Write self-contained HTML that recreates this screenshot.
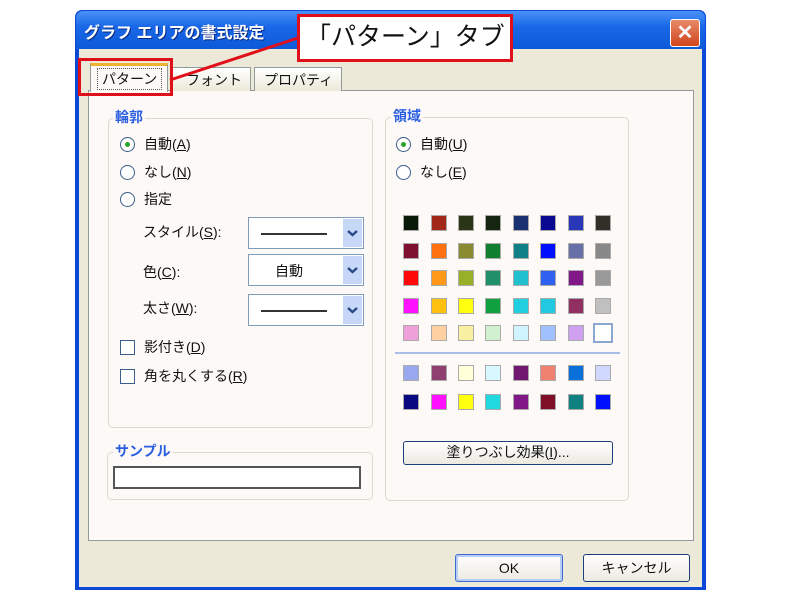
<!DOCTYPE html>
<html><head><meta charset="utf-8"><style>
*{box-sizing:border-box;margin:0;padding:0}
body{width:800px;height:600px;background:#fff;position:relative;overflow:hidden;font-family:"Liberation Sans","Noto Sans CJK JP",sans-serif;font-size:14px;color:#111}
.a{position:absolute}
.grp{position:absolute;border:1px solid #ddd8cc;border-radius:5px}
.lg{position:absolute;color:#2a5ee0;font-size:14px;background:#fdf9f8;padding:0 2px;font-weight:bold}
.rad{position:absolute;width:15px;height:15px;border:1px solid #3a5d8c;border-radius:50%;background:#fff}
.rad.on::after{content:"";position:absolute;left:4px;top:4px;width:5px;height:5px;border-radius:50%;background:#2aa32a}
.chk{position:absolute;width:15px;height:15px;border:1px solid #3a5d8c;background:#fff}
.t{position:absolute;font-size:14px;white-space:nowrap}
.cb{position:absolute;width:116px;height:32px;border:1px solid #7f9db9;background:#fff}
.cb .dd{position:absolute;right:1px;top:1px;width:19px;height:28px;background:#c7d7f7}
.cb .ln{position:absolute;left:12px;top:15px;width:66px;height:2px;background:#333}
.sw{position:absolute;width:16px;height:16px;border:1px solid #aaa}
.btn{position:absolute;border:1px solid #1c3f7a;border-radius:3px;background:linear-gradient(#fff,#ece9e0);text-align:center;font-size:14px}
</style></head><body>
<div class="a" style="left:75px;top:10px;width:631px;height:580px;background:#0a49d8;border-radius:7px 7px 0 0"></div>
<div class="a" style="left:76px;top:11px;width:629px;height:38px;background:linear-gradient(#4a92f7,#1a68e8 40%,#0c5ad8);border-radius:7px 7px 0 0"></div>
<div class="a" style="left:84px;top:19px;color:#fff;font-weight:bold;font-size:16px;text-shadow:1px 1px #0a2a80">グラフ エリアの書式設定</div>
<div class="a" style="left:670px;top:19px;width:30px;height:28px;background:linear-gradient(#e88a6a,#d0451c);border:1px solid #fff;border-radius:3px;color:#fff;font-size:20px;font-weight:bold;text-align:center;line-height:26px">✕</div>
<div class="a" style="left:79px;top:49px;width:623px;height:538px;background:#ece9d8"></div>
<div class="a" style="left:88px;top:90px;width:606px;height:451px;background:#fcf9f7;border:1px solid #919b9c"></div>
<div class="a" style="left:90px;top:63px;width:78px;height:29px;background:#fcf9f7;border:1px solid #919b9c;border-bottom:none;border-top:3px solid #f0b030"></div>
<div class="t" style="left:97px;top:68px;border:1px dotted #555;padding:0 4px">パターン</div>
<div class="a" style="left:171px;top:67px;width:80px;height:24px;background:linear-gradient(#fff,#ece9d8);border:1px solid #919b9c;border-bottom:none"></div>
<div class="t" style="left:186px;top:70px">フォント</div>
<div class="a" style="left:254px;top:67px;width:88px;height:24px;background:linear-gradient(#fff,#ece9d8);border:1px solid #919b9c;border-bottom:none"></div>
<div class="t" style="left:264px;top:70px">プロパティ</div>
<div class="grp" style="left:108px;top:118px;width:265px;height:310px"></div>
<div class="lg" style="left:113px;top:107px">輪郭</div>
<div class="rad on" style="left:120px;top:137px"></div><div class="t" style="left:144px;top:134px">自動(<u>A</u>)</div>
<div class="rad" style="left:120px;top:165px"></div><div class="t" style="left:144px;top:162px">なし(<u>N</u>)</div>
<div class="rad" style="left:120px;top:192px"></div><div class="t" style="left:144px;top:189px">指定</div>
<div class="t" style="left:143px;top:222px">スタイル(<u>S</u>):</div>
<div class="cb" style="left:248px;top:217px"><div class="ln"></div><div class="dd"><svg width="19" height="28"><path d="M5 12l4.5 4 4.5-4" fill="none" stroke="#2a4a8a" stroke-width="2.5"/></svg></div></div>
<div class="t" style="left:143px;top:262px">色(<u>C</u>):</div>
<div class="cb" style="left:248px;top:254px"><div class="t" style="left:26px;top:6px">自動</div><div class="dd"><svg width="19" height="28"><path d="M5 12l4.5 4 4.5-4" fill="none" stroke="#2a4a8a" stroke-width="2.5"/></svg></div></div>
<div class="t" style="left:143px;top:298px">太さ(<u>W</u>):</div>
<div class="cb" style="left:248px;top:294px"><div class="ln"></div><div class="dd"><svg width="19" height="28"><path d="M5 12l4.5 4 4.5-4" fill="none" stroke="#2a4a8a" stroke-width="2.5"/></svg></div></div>
<div class="chk" style="left:120px;top:340px"></div><div class="t" style="left:144px;top:337px">影付き(<u>D</u>)</div>
<div class="chk" style="left:120px;top:369px"></div><div class="t" style="left:144px;top:366px">角を丸くする(<u>R</u>)</div>
<div class="grp" style="left:107px;top:452px;width:266px;height:48px"></div>
<div class="lg" style="left:113px;top:441px">サンプル</div>
<div class="a" style="left:113px;top:466px;width:248px;height:23px;border:2px solid #555;background:#fff"></div>
<div class="grp" style="left:385px;top:117px;width:244px;height:384px"></div>
<div class="lg" style="left:391px;top:106px">領域</div>
<div class="rad on" style="left:396px;top:137px"></div><div class="t" style="left:420px;top:134px">自動(<u>U</u>)</div>
<div class="rad" style="left:396px;top:165px"></div><div class="t" style="left:420px;top:162px">なし(<u>E</u>)</div>
<div class="a" style="left:395px;top:352px;width:225px;height:2px;background:#a8bde8"></div>
<div id="pal"></div>
<div class="btn" style="left:403px;top:441px;width:210px;height:24px;line-height:21px">塗りつぶし効果(<u>I</u>)...</div>
<div class="btn" style="left:455px;top:554px;width:108px;height:28px;line-height:26px;border-color:#3c6ad0;box-shadow:inset 0 0 0 2px #b8cdf5">OK</div>
<div class="btn" style="left:583px;top:554px;width:107px;height:28px;line-height:26px">キャンセル</div>
<div class="a" style="left:78px;top:58px;width:95px;height:38px;border:3px solid #e0101a"></div>
<svg class="a" style="left:0;top:0" width="800" height="600"><line x1="170" y1="80" x2="298" y2="38" stroke="#e0101a" stroke-width="3"/></svg>
<div class="a" style="left:297px;top:14px;width:216px;height:48px;border:3px solid #e0101a;background:#fff;font-size:25px;line-height:40px;padding-left:6px;white-space:nowrap">「パターン」タブ</div>
<script>
var xs=[411,439,466,493,521,548,576,603],ys=[223,251,278,306,333,373,402];
var c=[["#0a1a08","#a02818","#2a3518","#152510","#183070","#080890","#2838b8","#303028"],
["#801030","#ff7010","#8a8a30","#108030","#108088","#0010ff","#6870a8","#888888"],
["#ff0808","#ff9818","#98b028","#20906a","#20c0d0","#3060f0","#801888","#999999"],
["#ff10ff","#ffc010","#ffff10","#10a040","#20d0e0","#20c8e0","#903060","#c0c0c0"],
["#f0a0d8","#ffd0a0","#f8f0a0","#d0f0d0","#d0f4ff","#a0c0ff","#d0a0f0","#ffffff"],
["#98a8f0","#904070","#ffffd8","#d8f8ff","#701870","#f08070","#0870d8","#d0d8ff"],
["#080880","#ff10ff","#ffff10","#20d8e0","#801888","#801028","#108080","#0010ff"]];
var h="";for(var r=0;r<7;r++)for(var i=0;i<8;i++){var s=(r==4&&i==7)?"border:2px solid #8aa8d0;width:20px;height:20px;margin:-2px":"";h+='<div class="sw" style="left:'+(xs[i]-8)+'px;top:'+(ys[r]-8)+'px;background:'+c[r][i]+';'+s+'"></div>';}
document.getElementById("pal").innerHTML=h;
</script>
</body></html>
